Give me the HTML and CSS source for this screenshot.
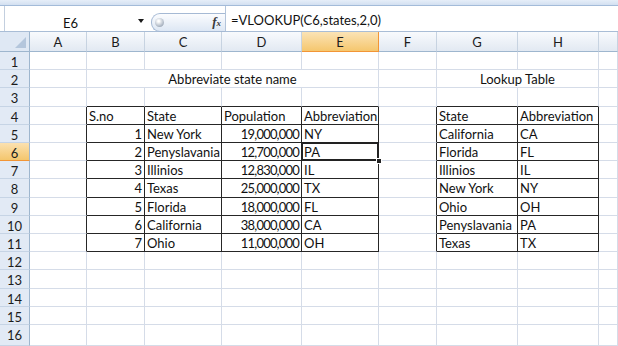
FILE: index.html
```html
<!DOCTYPE html>
<html lang="en">
<head>
  <meta charset="UTF-8">
  <title>VLOOKUP - Abbreviate state name</title>
  <link rel="stylesheet" href="styles.css">
</head>
<body>
  <div class="ribbon-edge"></div>
  <div class="formula-bar">
    <div class="name-box">
      <span class="cell-ref">E6</span>
      <span class="drop-arrow"></span>
    </div>
    <div class="fx-box">
      <span class="knob"></span>
      <span class="fx">f<span class="fx-x">x</span></span>
    </div>
    <div class="formula">=VLOOKUP(C6,states,2,0)</div>
  </div>
  <div class="sheet" id="sheet"></div>

  <script>
    const sheet = document.getElementById('sheet');
    const letters = ['A', 'B', 'C', 'D', 'E', 'F', 'G', 'H', ''];

    const states = [
      [1, 'New York', '19,000,000', 'NY'],
      [2, 'Penyslavania', '12,700,000', 'PA'],
      [3, 'Illinios', '12,830,000', 'IL'],
      [4, 'Texas', '25,000,000', 'TX'],
      [5, 'Florida', '18,000,000', 'FL'],
      [6, 'California', '38,000,000', 'CA'],
      [7, 'Ohio', '11,000,000', 'OH']
    ];
    const lookup = [
      ['California', 'CA'], ['Florida', 'FL'], ['Illinios', 'IL'], ['New York', 'NY'],
      ['Ohio', 'OH'], ['Penyslavania', 'PA'], ['Texas', 'TX']
    ];

    // cell values keyed by "C5" etc.
    const cells = {
      B2: { text: 'Abbreviate state name', span: 4, cls: 'center' },
      G2: { text: 'Lookup Table', span: 2, cls: 'center' },
      B4: { text: 'S.no' }, C4: { text: 'State' }, D4: { text: 'Population' }, E4: { text: 'Abbreviation' },
      G4: { text: 'State' }, H4: { text: 'Abbreviation' }
    };
    states.forEach((s, i) => {
      const r = i + 5;
      cells['B' + r] = { text: s[0], cls: 'num' };
      cells['C' + r] = { text: s[1] };
      cells['D' + r] = { text: s[2], cls: 'num pop' };
      cells['E' + r] = { text: s[3] };
    });
    lookup.forEach((s, i) => {
      const r = i + 5;
      cells['G' + r] = { text: s[0] };
      cells['H' + r] = { text: s[1] };
    });

    // bordered ranges B4:E11 and G4:H11
    function inTable(r, c) {
      return r >= 4 && r <= 11 && ((c >= 1 && c <= 4) || (c >= 6 && c <= 7));
    }

    function addCell(className, text) {
      const div = document.createElement('div');
      div.className = className;
      if (text !== undefined) div.textContent = text;
      sheet.appendChild(div);
      return div;
    }

    // header row
    addCell('corner');
    letters.forEach(l => addCell(l === 'E' ? 'col-head on' : 'col-head', l));

    for (let r = 1; r <= 16; r++) {
      addCell(r === 6 ? 'row-head on' : 'row-head', r);
      let skip = 0;
      for (let c = 0; c < letters.length; c++) {
        if (skip > 0) { skip--; continue; }
        const data = cells[letters[c] + r] || {};
        let cls = 'cell';
        if (inTable(r, c) || inTable(r, c + 1)) cls += ' br';
        if (inTable(r, c) || inTable(r + 1, c)) cls += ' bb';
        if (data.cls) cls += ' ' + data.cls;
        if (letters[c] + r === 'E6') cls += ' selected';
        const div = addCell(cls, data.text);
        if (data.span) {
          div.style.gridColumn = 'span ' + data.span;
          skip = data.span - 1;
        }
      }
    }
  </script>
</body>
</html>
```

FILE: styles.css
```css
body {
  margin: 0;
  width: 618px;
  height: 346px;
  overflow: hidden;
  background-color: #ffffff;
  font-family: Lato, "Liberation Sans", Arial, sans-serif;
  font-size: 13px;
  color: #111111;
}

.ribbon-edge {
  height: 5px;
  background: linear-gradient(#e6eef8, #d3e0f1);
  border-bottom: 1px solid #a3bbd9;
}

/* formula bar */
.formula-bar {
  display: flex;
  height: 25px;
  border-bottom: 1px solid #a9bdd6;
  background-color: #ffffff;
}

.name-box {
  position: relative;
  width: 131px;
  margin-left: 4px;
  padding-right: 10px;
  padding-top: 9px;
  border-left: 1px solid #c3cfdf;
  text-align: center;
  line-height: 16px;
}

.drop-arrow {
  position: absolute;
  right: 2px;
  top: 13px;
  width: 0;
  height: 0;
  border-left: 3px solid transparent;
  border-right: 3px solid transparent;
  border-top: 4px solid #1a1a1a;
}

.fx-box {
  display: flex;
  align-items: center;
  justify-content: space-between;
  width: 66px;
  height: 17px;
  margin-top: 7px;
  margin-left: 5px;
  padding: 0 4px 0 3px;
  border: 1px solid #a5b9d4;
  border-right: none;
  border-radius: 9px 0 0 9px;
  background: linear-gradient(#fbfcfe, #dde7f4);
}

.knob {
  width: 9px;
  height: 9px;
  border-radius: 50%;
  background: radial-gradient(circle at 40% 35%, #ffffff 10%, #aeb8c5 65%, #7f8a98);
}

.fx {
  font-family: "Liberation Serif", serif;
  font-style: italic;
  font-weight: bold;
  font-size: 13px;
  color: #3a3a3a;
  line-height: 14px;
}

.fx-x {
  font-size: 9px;
}

.formula {
  flex: 1;
  padding-left: 5px;
  padding-top: 6px;
  line-height: 16px;
  border-left: 1px solid #b3c4da;
  white-space: nowrap;
}

/* worksheet grid */
.sheet {
  display: grid;
  grid-template-columns: 30px 57px 58px 77px 80px 77px 58px 81px 81px 1fr;
  grid-template-rows: 20px 18px 18px 19px 18px 18px 18px 18px 19px 18px 18px 18px 18px 19px 18px 18px 21px;
}

.corner {
  position: relative;
  background: #dfe8f4;
  border-right: 1px solid #9eb6ce;
  border-bottom: 1px solid #9eb6ce;
}

.corner::after {
  content: "";
  position: absolute;
  right: 3px;
  bottom: 3px;
  width: 0;
  height: 0;
  border-left: 11px solid transparent;
  border-bottom: 11px solid #b4c6dc;
}

.col-head {
  background: linear-gradient(#f8fafd, #e2e9f2);
  border-right: 1px solid #c7d3e1;
  border-bottom: 1px solid #9eb6ce;
  text-align: center;
  padding-top: 2px;
  line-height: 17px;
  color: #1c1c1c;
}

.col-head.on {
  background: linear-gradient(#fbe3b6, #f5c76e);
  border-right-color: #f29536;
  border-bottom-color: #f29536;
}

.row-head {
  background-color: #e2eaf5;
  border-right: 1px solid #9eb6ce;
  border-bottom: 1px solid #c6d4e5;
  text-align: center;
  padding-top: 2px;
  line-height: 16px;
  color: #1c1c1c;
}

.row-head.on {
  background: linear-gradient(#fbe1b0, #f4c66d);
  border-bottom-color: #f29536;
}

.cell {
  position: relative;
  box-sizing: border-box;
  padding: 2px 2px 0;
  border-right: 1px solid #d5dce8;
  border-bottom: 1px solid #d5dce8;
  line-height: 15px;
  white-space: nowrap;
}

.cell.br {
  border-right-color: #262626;
}

.cell.bb {
  border-bottom-color: #262626;
}

.center {
  text-align: center;
}

.num {
  text-align: right;
}

.pop {
  letter-spacing: -0.8px;
}

/* active cell frame with fill handle */
.selected::after {
  content: "";
  position: absolute;
  left: -1px;
  top: -1px;
  right: -1px;
  bottom: -1px;
  border: 2px solid #222222;
}

.selected::before {
  content: "";
  position: absolute;
  right: -4px;
  bottom: -4px;
  width: 4px;
  height: 4px;
  background-color: #222222;
  border: 1px solid #ffffff;
  z-index: 1;
}
```
